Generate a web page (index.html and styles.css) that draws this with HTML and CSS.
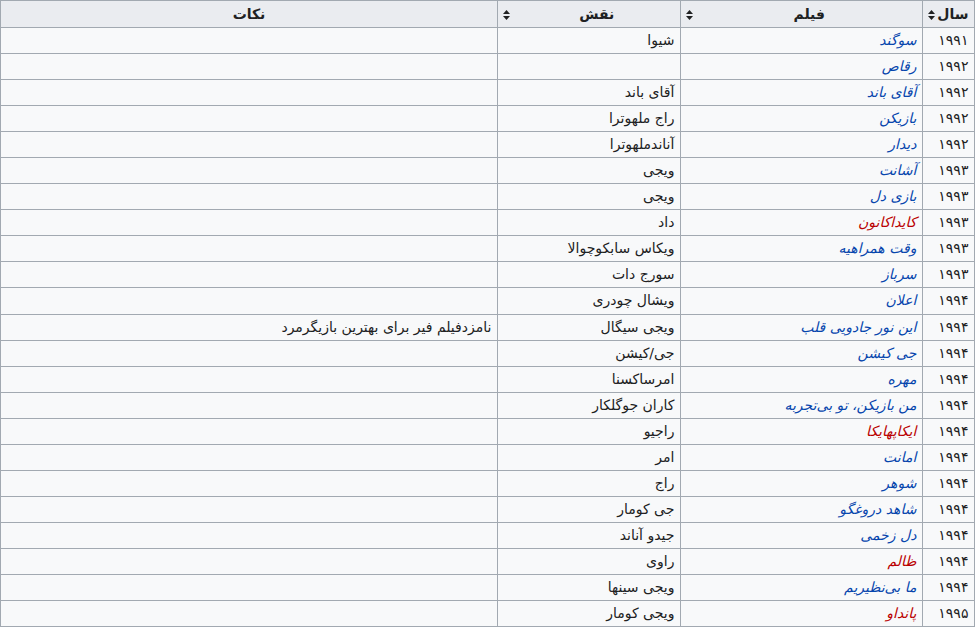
FILE: index.html
```html
<!DOCTYPE html>
<html lang="fa" dir="rtl">
<head>
<meta charset="utf-8">
<title>فیلم‌شناسی</title>
<link rel="stylesheet" href="styles.css">
</head>
<body>
<table class="wikitable">
<colgroup>
<col class="c-year"><col class="c-film"><col class="c-role"><col class="c-notes">
</colgroup>
<thead>
<tr>
<th class="sortable">سال<svg class="sort" viewBox="0 0 7 10" width="7" height="10"><path d="M3.5 0 L7 4 L0 4 Z M3.5 10 L0 6 L7 6 Z" fill="#202122"/></svg></th>
<th class="sortable">فیلم<svg class="sort" viewBox="0 0 7 10" width="7" height="10"><path d="M3.5 0 L7 4 L0 4 Z M3.5 10 L0 6 L7 6 Z" fill="#202122"/></svg></th>
<th class="sortable">نقش<svg class="sort" viewBox="0 0 7 10" width="7" height="10"><path d="M3.5 0 L7 4 L0 4 Z M3.5 10 L0 6 L7 6 Z" fill="#202122"/></svg></th>
<th>نکات</th>
</tr>
</thead>
<tbody>
<tr><td>۱۹۹۱</td><td><a href="#">سوگند</a></td><td>شیوا</td><td></td></tr>
<tr><td>۱۹۹۲</td><td><a href="#">رقاص</a></td><td></td><td></td></tr>
<tr><td>۱۹۹۲</td><td><a href="#">آقای باند</a></td><td>آقای باند</td><td></td></tr>
<tr><td>۱۹۹۲</td><td><a href="#">بازیکن</a></td><td>راج ملهوترا</td><td></td></tr>
<tr><td>۱۹۹۲</td><td><a href="#">دیدار</a></td><td>آناندملهوترا</td><td></td></tr>
<tr><td>۱۹۹۳</td><td><a href="#">آشانت</a></td><td>ویجی</td><td></td></tr>
<tr><td>۱۹۹۳</td><td><a href="#">بازی دل</a></td><td>ویجی</td><td></td></tr>
<tr><td>۱۹۹۳</td><td><a href="#" class="new">کایداکانون</a></td><td>داد</td><td></td></tr>
<tr><td>۱۹۹۳</td><td><a href="#">وقت همراهیه</a></td><td>ویکاس سابکوچوالا</td><td></td></tr>
<tr><td>۱۹۹۳</td><td><a href="#">سرباز</a></td><td>سورج دات</td><td></td></tr>
<tr><td>۱۹۹۴</td><td><a href="#">اعلان</a></td><td>ویشال چودری</td><td></td></tr>
<tr><td>۱۹۹۴</td><td><a href="#">این نور جادویی قلب</a></td><td>ویجی سیگال</td><td>نامزدفیلم فیر برای بهترین بازیگرمرد</td></tr>
<tr><td>۱۹۹۴</td><td><a href="#">جی کیشن</a></td><td>جی/کیشن</td><td></td></tr>
<tr><td>۱۹۹۴</td><td><a href="#">مهره</a></td><td>امرساکسنا</td><td></td></tr>
<tr><td>۱۹۹۴</td><td><a href="#">من بازیکن، تو بی‌تجربه</a></td><td>کاران جوگلکار</td><td></td></tr>
<tr><td>۱۹۹۴</td><td><a href="#" class="new">ایکاپهایکا</a></td><td>راجیو</td><td></td></tr>
<tr><td>۱۹۹۴</td><td><a href="#">امانت</a></td><td>امر</td><td></td></tr>
<tr><td>۱۹۹۴</td><td><a href="#">شوهر</a></td><td>راج</td><td></td></tr>
<tr><td>۱۹۹۴</td><td><a href="#">شاهد دروغگو</a></td><td>جی کومار</td><td></td></tr>
<tr><td>۱۹۹۴</td><td><a href="#">دل زخمی</a></td><td>جیدو آناند</td><td></td></tr>
<tr><td>۱۹۹۴</td><td><a href="#" class="new">ظالم</a></td><td>راوی</td><td></td></tr>
<tr><td>۱۹۹۴</td><td><a href="#">ما بی‌نظیریم</a></td><td>ویجی سینها</td><td></td></tr>
<tr><td>۱۹۹۵</td><td><a href="#" class="new">پانداو</a></td><td>ویجی کومار</td><td></td></tr>
</tbody>
</table>
</body>
</html>
```
FILE: styles.css
```css
html, body {
  margin: 0;
  padding: 0;
  background: #ffffff;
}
body {
  font-family: "DejaVu Sans", sans-serif;
  font-size: 14px;
  color: #202122;
}
.wikitable {
  width: 975px;
  border-collapse: collapse;
  background: #f8f9fa;
  color: #202122;
  border: 1px solid #a2a9b1;
  table-layout: fixed;
}
.c-year { width: 52px; }
.c-film { width: 242px; }
.c-role { width: 183px; }
.c-notes { width: auto; }
.wikitable th,
.wikitable td {
  border: 1px solid #a2a9b1;
  padding: 2px 5.6px 2.05px;
  line-height: 21px;
  white-space: nowrap;
  overflow: hidden;
}
.wikitable th {
  background: #eaecf0;
  font-weight: bold;
  text-align: center;
  padding-top: 2.5px;
  padding-bottom: 2.5px;
}
.wikitable th.sortable {
  position: relative;
  padding-left: 21px;
}
.sort {
  position: absolute;
  left: 5px;
  top: 8.5px;
}
.wikitable td {
  text-align: right;
}
.wikitable a {
  color: #0645ad;
  text-decoration: none;
  font-style: italic;
}
.wikitable a.new {
  color: #ba0000;
}
```
